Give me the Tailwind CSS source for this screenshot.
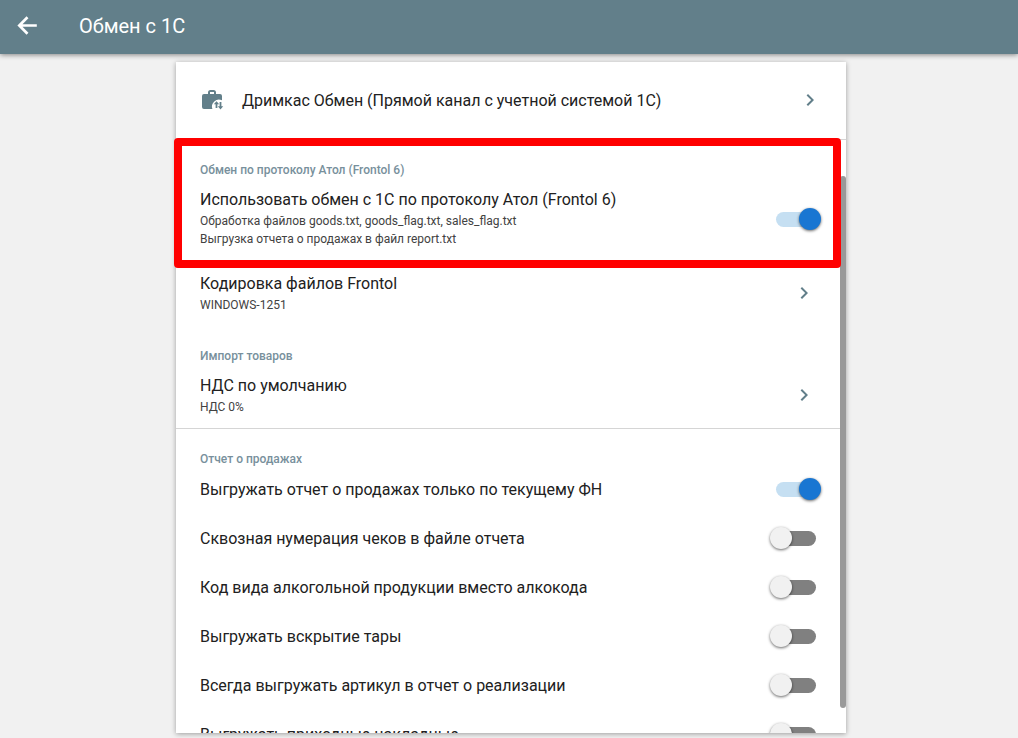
<!DOCTYPE html>
<html lang="ru">
<head>
<meta charset="utf-8">
<meta name="viewport" content="width=device-width, initial-scale=1">
<title>Обмен с 1С</title>
<script src="https://cdn.jsdelivr.net/npm/@tailwindcss/browser@4"></script>
</head>
<body class="flex h-screen flex-col overflow-hidden bg-[#f1f1f1] font-['Roboto',sans-serif] text-base text-[#212121]">
<svg class="hidden" aria-hidden="true">
  <symbol id="chevron" viewBox="0 0 24 24"><path fill="currentColor" d="M8.59 16.59 13.17 12 8.59 7.41 10 6l6 6-6 6z"/></symbol>
</svg>

<header class="relative z-10 flex h-[54px] shrink-0 items-center gap-[39px] bg-[#627f8a] px-4 pb-[2px] text-white shadow-[0_1px_5px_rgba(0,0,0,0.45)]">
  <button type="button" aria-label="Назад" class="size-6">
    <svg class="size-6 overflow-visible" viewBox="0 0 24 24" fill="none" stroke="currentColor" stroke-width="2.7"><path d="M20.800 11.500H3.500M11.500 3.300 3.300 11.500l8.200 8.200"/></svg>
  </button>
  <h1 class="text-xl leading-6">Обмен с 1С</h1>
</header>

<main class="flex min-h-0 flex-1 justify-center pt-2 pb-[5px] pl-1">
  <div class="flex w-full max-w-[670px] flex-col bg-white shadow-[0_1px_5px_rgba(0,0,0,0.35)]">
    <a href="#exchange" class="flex h-[77px] shrink-0 items-center gap-[18px] px-6">
      <svg class="size-6 shrink-0 text-[#627f8a]" viewBox="0 1 24 24" fill="currentColor">
        <path d="M4 6h4V4.500Q8 2 10.500 2h3Q16 2 16 4.500V6h4q2 0 2 2v4.300A7 7 0 0 0 12.400 21H4q-2 0-2-2V8q0-2 2-2Zm6 0h4V4h-4Z"/>
        <path d="m16.500 13.300 2.700 3h-1.800V20h-1.800v-3.700h-1.800ZM19.600 14h1.800v4.300h1.800L20.500 21.400l-2.700-3.100h1.800Z"/>
      </svg>
      <span class="flex-1">Дримкас Обмен (Прямой канал с учетной системой 1С)</span>
      <svg class="-mt-[2px] size-6 text-[#627f8a]"><use href="#chevron"/></svg>
    </a>

    <div class="relative min-h-0 flex-1 border-t border-[#d5d5d5]">
      <div class="h-full overflow-hidden pr-[6px]">
        <section class="px-6 pt-5 pb-[10px]">
          <h2 class="text-xs leading-5 font-medium text-[#78909c]">Обмен по протоколу Атол (Frontol 6)</h2>
          <label class="mt-[10px] flex items-center justify-between">
            <span>
              <span class="block leading-5">Использовать обмен с 1С по протоколу Атол (Frontol 6)</span>
              <span class="mt-[2px] block text-xs leading-[18px] text-[#424242]">Обработка файлов goods.txt, goods_flag.txt, sales_flag.txt<br>Выгрузка отчета о продажах в файл report.txt</span>
            </span>
            <input type="checkbox" checked class="relative -mr-[6px] h-[22px] w-[52px] shrink-0 appearance-none before:absolute before:top-[4px] before:left-[6px] before:h-[15px] before:w-10 before:rounded-full before:bg-[#808080] after:absolute after:top-0 after:left-0 after:size-[22px] after:rounded-full after:bg-[#f1f1f1] after:shadow-[0_1px_3px_rgba(0,0,0,0.6)] checked:before:bg-[#c5dff2] checked:after:left-[29px] checked:after:bg-[#1976d2]">
          </label>
        </section>

        <a href="#encoding" class="flex items-center justify-between px-6 pt-4">
          <span>
            <span class="block leading-5">Кодировка файлов Frontol</span>
            <span class="mt-[2px] block text-xs leading-[18px] text-[#424242]">WINDOWS-1251</span>
          </span>
          <svg class="-mt-[2px] size-6 text-[#627f8a]"><use href="#chevron"/></svg>
        </a>

        <section class="border-b border-[#d5d5d5] px-6 pt-8 pb-3">
          <h2 class="text-xs leading-5 font-medium text-[#78909c]">Импорт товаров</h2>
          <a href="#vat" class="mt-[10px] flex items-center justify-between">
            <span>
              <span class="block leading-5">НДС по умолчанию</span>
              <span class="mt-[2px] block text-xs leading-[18px] text-[#424242]">НДС 0%</span>
            </span>
            <svg class="-mt-[2px] size-6 text-[#627f8a]"><use href="#chevron"/></svg>
          </a>
        </section>

        <section class="px-6 pt-5">
          <h2 class="text-xs leading-5 font-medium text-[#78909c]">Отчет о продажах</h2>
          <div class="mt-1 flex flex-col gap-[17px]">
            <label class="flex h-8 items-center justify-between">
              <span class="pt-[2px]">Выгружать отчет о продажах только по текущему ФН</span>
              <input type="checkbox" checked class="relative -mr-[6px] h-[22px] w-[52px] shrink-0 appearance-none before:absolute before:top-[4px] before:left-[6px] before:h-[15px] before:w-10 before:rounded-full before:bg-[#808080] after:absolute after:top-0 after:left-0 after:size-[22px] after:rounded-full after:bg-[#f1f1f1] after:shadow-[0_1px_3px_rgba(0,0,0,0.6)] checked:before:bg-[#c5dff2] checked:after:left-[29px] checked:after:bg-[#1976d2]">
            </label>
            <label class="flex h-8 items-center justify-between">
              <span class="pt-[2px]">Сквозная нумерация чеков в файле отчета</span>
              <input type="checkbox" class="relative -mr-[6px] h-[22px] w-[52px] shrink-0 appearance-none before:absolute before:top-[4px] before:left-[6px] before:h-[15px] before:w-10 before:rounded-full before:bg-[#808080] after:absolute after:top-0 after:left-0 after:size-[22px] after:rounded-full after:bg-[#f1f1f1] after:shadow-[0_1px_3px_rgba(0,0,0,0.6)] checked:before:bg-[#c5dff2] checked:after:left-[29px] checked:after:bg-[#1976d2]">
            </label>
            <label class="flex h-8 items-center justify-between">
              <span class="pt-[2px]">Код вида алкогольной продукции вместо алкокода</span>
              <input type="checkbox" class="relative -mr-[6px] h-[22px] w-[52px] shrink-0 appearance-none before:absolute before:top-[4px] before:left-[6px] before:h-[15px] before:w-10 before:rounded-full before:bg-[#808080] after:absolute after:top-0 after:left-0 after:size-[22px] after:rounded-full after:bg-[#f1f1f1] after:shadow-[0_1px_3px_rgba(0,0,0,0.6)] checked:before:bg-[#c5dff2] checked:after:left-[29px] checked:after:bg-[#1976d2]">
            </label>
            <label class="flex h-8 items-center justify-between">
              <span class="pt-[2px]">Выгружать вскрытие тары</span>
              <input type="checkbox" class="relative -mr-[6px] h-[22px] w-[52px] shrink-0 appearance-none before:absolute before:top-[4px] before:left-[6px] before:h-[15px] before:w-10 before:rounded-full before:bg-[#808080] after:absolute after:top-0 after:left-0 after:size-[22px] after:rounded-full after:bg-[#f1f1f1] after:shadow-[0_1px_3px_rgba(0,0,0,0.6)] checked:before:bg-[#c5dff2] checked:after:left-[29px] checked:after:bg-[#1976d2]">
            </label>
            <label class="flex h-8 items-center justify-between">
              <span class="pt-[2px]">Всегда выгружать артикул в отчет о реализации</span>
              <input type="checkbox" class="relative -mr-[6px] h-[22px] w-[52px] shrink-0 appearance-none before:absolute before:top-[4px] before:left-[6px] before:h-[15px] before:w-10 before:rounded-full before:bg-[#808080] after:absolute after:top-0 after:left-0 after:size-[22px] after:rounded-full after:bg-[#f1f1f1] after:shadow-[0_1px_3px_rgba(0,0,0,0.6)] checked:before:bg-[#c5dff2] checked:after:left-[29px] checked:after:bg-[#1976d2]">
            </label>
            <label class="flex h-8 items-center justify-between">
              <span class="pt-[2px]">Выгружать приходные накладные</span>
              <input type="checkbox" class="relative -mr-[6px] h-[22px] w-[52px] shrink-0 appearance-none before:absolute before:top-[4px] before:left-[6px] before:h-[15px] before:w-10 before:rounded-full before:bg-[#808080] after:absolute after:top-0 after:left-0 after:size-[22px] after:rounded-full after:bg-[#f1f1f1] after:shadow-[0_1px_3px_rgba(0,0,0,0.6)] checked:before:bg-[#c5dff2] checked:after:left-[29px] checked:after:bg-[#1976d2]">
            </label>
          </div>
        </section>
      </div>
      <div class="absolute top-9 right-0 bottom-[25px] w-[6px] rounded-full bg-[#999]"></div>
      <!-- Highlight frame around the Frontol protocol setting -->
      <div class="pointer-events-none absolute top-[-2px] right-[5px] left-[-2px] z-10 h-[130px] rounded border-8 border-[#ff0000]"></div>
    </div>
  </div>
</main>
</body>
</html>
